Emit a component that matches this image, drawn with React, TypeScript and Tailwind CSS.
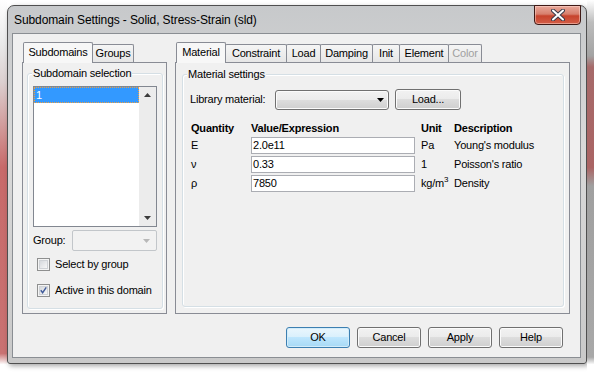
import React from 'react';

type TabDef = { label: string; w: string; active?: boolean; disabled?: boolean };

const leftTabs: TabDef[] = [
  { label: 'Subdomains', w: 'w-[70px]', active: true },
  { label: 'Groups', w: 'w-[42px]' },
];

const rightTabs: TabDef[] = [
  { label: 'Material', w: 'w-[50px]', active: true },
  { label: 'Constraint', w: 'w-[62px]' },
  { label: 'Load', w: 'w-[35px]' },
  { label: 'Damping', w: 'w-[53px]' },
  { label: 'Init', w: 'w-[28px]' },
  { label: 'Element', w: 'w-[50px]' },
  { label: 'Color', w: 'w-[34px]', disabled: true },
];

const rows = [
  { q: 'E', val: '2.0e11', unit: <>Pa</>, desc: "Young's modulus" },
  { q: 'ν', val: '0.33', unit: <>1</>, desc: "Poisson's ratio" },
  { q: 'ρ', val: '7850', unit: <>kg/m<span className="text-[8px] relative -top-[5px]">3</span></>, desc: 'Density' },
];

function TabStrip({ tabs }: { tabs: TabDef[] }) {
  return (
    <div className="flex items-end h-[20px] pl-px">
      {tabs.map((t, i) =>
        t.active ? (
          <div
            key={t.label}
            className={`${t.w} relative z-10 -mb-px h-[21px] shrink-0 flex items-center justify-center pb-[2px] border border-b-0 border-[#898c95] rounded-t-[2px] bg-[#f7f7f7]`}
          >
            {t.label}
          </div>
        ) : (
          <div
            key={t.label}
            className={`${t.w} ${i > 0 ? '-ml-px' : ''} h-[18px] shrink-0 flex items-center justify-center border border-b-0 border-[#898c95] rounded-t-[2px] bg-[linear-gradient(to_bottom,#f5f5f5,#e6e6e6)] ${t.disabled ? 'text-[#a0a0a0]' : ''}`}
          >
            {t.label}
          </div>
        )
      )}
    </div>
  );
}

function GroupBox({ label, className, children }: { label: string; className?: string; children: React.ReactNode }) {
  return (
    <div className={`relative border border-[#d5dfe5] rounded-[3px] shadow-[inset_1px_1px_0_#ffffff,1px_1px_0_#ffffff] ${className ?? ''}`}>
      <span className="absolute left-[4px] -top-[8px] px-[1px] bg-[#f0f0f0] leading-[14px]">{label}</span>
      {children}
    </div>
  );
}

function Checkbox({ checked, label }: { checked?: boolean; label: string }) {
  return (
    <div className="flex items-center gap-[5px] h-[13px]">
      <div className="w-[13px] h-[13px] border border-[#8e8f8f] bg-[#f4f4f4] p-px">
        <div className="w-full h-full border border-[#cfd2d6] bg-[linear-gradient(135deg,#d6d9dd,#f7f7f7)] relative">
          {checked && (
            <svg viewBox="0 0 9 9" className="absolute inset-0 w-full h-full overflow-visible">
              <path d="M1 4.2 L3.4 7.4 L8 0.4" fill="none" stroke="#3f5a9a" strokeWidth="1.8" />
            </svg>
          )}
        </div>
      </div>
      <span>{label}</span>
    </div>
  );
}

function Arrow({ down, color }: { down?: boolean; color: string }) {
  return (
    <svg width="7" height="4" viewBox="0 0 7 4">
      <path d={down ? 'M0 0 H7 L3.5 4 Z' : 'M0 4 H7 L3.5 0 Z'} fill={color} />
    </svg>
  );
}

function Button({ label, isDefault, w = 'w-[64px]' }: { label: string; isDefault?: boolean; w?: string }) {
  return (
    <div
      className={`${w} h-[21px] flex items-center justify-center rounded-[3px] border ${
        isDefault
          ? 'border-[#3c7fb1] bg-[linear-gradient(to_bottom,#eaf6fd_0%,#d9f0fc_50%,#bee6fd_50%,#a7d9f5_100%)] shadow-[inset_0_0_0_1px_#d2ecfa]'
          : 'border-[#707070] bg-[linear-gradient(to_bottom,#f2f2f2_0%,#ebebeb_50%,#dddddd_50%,#cfcfcf_100%)] shadow-[inset_0_0_0_1px_#fbfbfb]'
      }`}
    >
      {label}
    </div>
  );
}

function CloseButton() {
  return (
    <div className="w-[47px] h-[20px] -mt-px flex items-center justify-center rounded-b-[4px] border border-[#3f1a16] bg-[linear-gradient(to_bottom,#e9a99b_0%,#d77f6d_45%,#c7432c_55%,#d35e48_100%)] shadow-[inset_0_0_0_1px_rgba(255,220,210,0.5)]">
      <svg width="14" height="12" viewBox="0 0 14 12">
        <path d="M2 1.5 L12 10.5 M12 1.5 L2 10.5" stroke="#3a3a4a" strokeWidth="4" strokeLinecap="round" />
        <path d="M2 1.5 L12 10.5 M12 1.5 L2 10.5" stroke="#ffffff" strokeWidth="2" strokeLinecap="round" />
      </svg>
    </div>
  );
}

export default function App() {
  return (
    <div className="w-[594px] h-[372px] flex bg-white overflow-hidden font-['Liberation_Sans',Arial,sans-serif] text-[11px] tracking-[-0.2px] text-black">
      <div className="w-[7px] shrink-0 bg-[linear-gradient(to_bottom,#ffffff_0%,#e9e9e9_12%,#dcd0d0_22%,#c86a6a_45%,#c97272_95%,#ffffff_98%)]" />

      <div className="w-[580px] h-[359px] mt-[5px] shrink-0 flex flex-col border border-[#4f4f4f] rounded-t-[7px] rounded-b-[3px] bg-[linear-gradient(to_bottom,#c7c9cb_0%,#d9d9d9_40%,#c9c9c9_100%)] shadow-[2px_2px_5px_rgba(0,0,0,0.35)]">
        {/* title bar */}
        <div className="h-[27px] flex items-start justify-between">
          <div className="pl-[6px] pt-[7px] text-[12px] leading-[14px] tracking-[-0.1px]">Subdomain Settings - Solid, Stress-Strain (sld)</div>
          <div className="mr-[5px]">
            <CloseButton />
          </div>
        </div>

        {/* client */}
        <div className="ml-[4px] w-[569px] h-[325px] border border-[#8a8e93] bg-[#f0f0f0] pt-[8px] pl-[9px] pr-[10px] flex flex-col">
          <div className="flex gap-[8px]">
            {/* left tabs */}
            <div className="w-[145px] flex flex-col">
              <TabStrip tabs={leftTabs} />
              <div className="h-[252px] border border-[#898c95] bg-[#f0f0f0] pt-[10px] pl-[4px] pr-[3px]">
                <GroupBox label="Subdomain selection" className="h-[236px] pt-[12px] px-[5px]">
                  <div className="h-[141px] border border-[#828790] bg-white flex">
                    <div className="flex-1">
                      <div className="h-[16px] bg-[#3399ff] text-white border border-dotted border-[#f0a040] flex items-center pl-px">1</div>
                    </div>
                    <div className="w-[17px] bg-[#ececec] flex flex-col items-center justify-between py-[6px]">
                      <Arrow color="#3c3c3c" />
                      <Arrow down color="#3c3c3c" />
                    </div>
                  </div>
                  <div className="flex items-center mt-[3px] h-[21px]">
                    <span className="w-[39px]">Group:</span>
                    <div className="w-[85px] h-[21px] border border-[#c2c6ca] rounded-[2px] bg-[#f2f2f2] flex items-center justify-end pr-[6px]">
                      <Arrow down color="#b8b8b8" />
                    </div>
                  </div>
                  <div className="pl-[4px] mt-[7px] flex flex-col gap-[13px]">
                    <Checkbox label="Select by group" />
                    <Checkbox checked label="Active in this domain" />
                  </div>
                </GroupBox>
              </div>
            </div>

            {/* right tabs */}
            <div className="w-[395px] flex flex-col">
              <TabStrip tabs={rightTabs} />
              <div className="h-[252px] border border-[#898c95] bg-[#f0f0f0] pt-[11px] pl-[6px] pr-[5px]">
                <GroupBox label="Material settings" className="h-[233px] pt-[14px] pl-[7px]">
                  <div className="flex items-center h-[21px]">
                    <span className="w-[85px]">Library material:</span>
                    <div className="w-[114px] h-[20px] rounded-[3px] border border-[#707070] bg-[linear-gradient(to_bottom,#f2f2f2_0%,#ebebeb_50%,#dddddd_50%,#cfcfcf_100%)] shadow-[inset_0_0_0_1px_#fbfbfb] flex items-center justify-end pr-[4px]">
                      <Arrow down color="#000000" />
                    </div>
                    <div className="ml-[6px]">
                      <Button label="Load..." w="w-[66px]" />
                    </div>
                  </div>

                  <div className="mt-[11px] grid grid-cols-[60px_170px_33px_1fr] pl-px">
                    <div className="h-[14px] font-bold leading-[14px]">Quantity</div>
                    <div className="h-[14px] font-bold leading-[14px]">Value/Expression</div>
                    <div className="h-[14px] font-bold leading-[14px]">Unit</div>
                    <div className="h-[14px] font-bold leading-[14px]">Description</div>
                    <div className="col-span-4 h-[2px]" />
                    {rows.map(r => (
                      <React.Fragment key={r.q}>
                        <div className="h-[19px] leading-[17px]">{r.q}</div>
                        <div className="h-[19px]">
                          <div className="w-[164px] h-[17px] border border-[#abadb3] bg-white pl-[1px] leading-[15px]">{r.val}</div>
                        </div>
                        <div className="h-[19px] leading-[17px] whitespace-nowrap">{r.unit}</div>
                        <div className="h-[19px] leading-[17px]">{r.desc}</div>
                      </React.Fragment>
                    ))}
                  </div>
                </GroupBox>
              </div>
            </div>
          </div>

          {/* buttons */}
          <div className="mt-[13px] flex justify-end gap-[7px] pr-[7px]">
            <Button label="OK" isDefault />
            <Button label="Cancel" />
            <Button label="Apply" />
            <Button label="Help" />
          </div>
        </div>
      </div>

      <div className="w-[7px] shrink-0 bg-[linear-gradient(to_bottom,#ffffff_0%,#bdbdbd_6%,#a3a3a3_15%,#a66a6a_18%,#aa6464_45%,#a0a0a0_50%,#a8a8a8_96%,#ffffff_98%)]" />
    </div>
  );
}
